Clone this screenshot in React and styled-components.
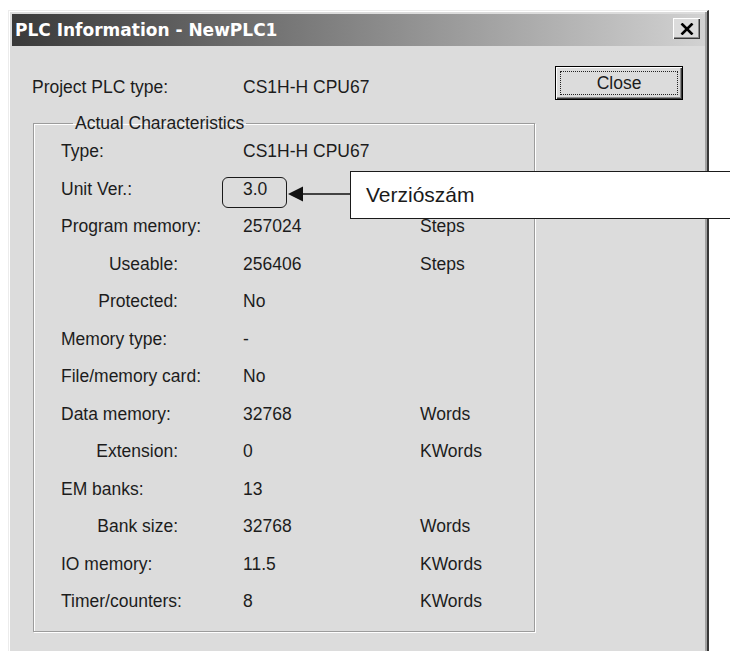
import React from "react";
import styled, { createGlobalStyle } from "styled-components";

const GlobalStyle = createGlobalStyle`
  html, body {
    margin: 0;
    background: #fff;
  }
  body {
    font-family: "Liberation Sans", Arial, sans-serif;
    color: #1c1c1c;
  }
`;

const Page = styled.div`
  position: relative;
  width: 730px;
  height: 651px;
  overflow: hidden;
  padding: 10px 0 0 8px;
  box-sizing: border-box;
`;

const Window = styled.div`
  width: 701px;
  height: 680px;
  box-sizing: border-box;
  background: #dcdcdc;
  border-top: 1px solid #ececec;
  border-left: 1px solid #ececec;
  border-right: 2px solid #383838;
  box-shadow: inset 1px 1px 0 #fff, inset -2px 0 0 #a2a2a2;
  padding: 3px 2px 0 3px;
  display: flex;
  flex-direction: column;
`;

const TitleBar = styled.div`
  height: 32px;
  display: flex;
  justify-content: space-between;
  padding: 0 5px 0 3px;
  background: linear-gradient(to right, #3a3a3a, #d2d2d2);
`;

const Title = styled.span`
  font-family: "DejaVu Sans", sans-serif;
  font-weight: bold;
  font-size: 17px;
  line-height: 32px;
  color: #fff;
`;

const CaptionButton = styled.div`
  margin-top: 4px;
  width: 27px;
  height: 21px;
  background: #dcdcdc;
  box-shadow: inset 1px 1px 0 #fff, inset -1px -1px 0 #3a3a3a,
    inset -2px -2px 0 #8c8c8c;
  display: flex;
  align-items: center;
  justify-content: center;
`;

const Body = styled.div`
  display: flex;
  align-items: flex-start;
  gap: 20px;
  padding: 0 22px 0 21px;
`;

const Main = styled.div`
  width: 502px;
`;

const ProjectRow = styled.div`
  display: grid;
  grid-template-columns: 211px 1fr;
  align-items: center;
  height: 38px;
  margin: 22px 0 0 -1px;
  font-size: 17.5px;
`;

const Group = styled.fieldset`
  margin: 7px 0 0;
  padding: 0 0 10px 27px;
  width: 100%;
  box-sizing: border-box;
  min-width: 0;
  border: 1px solid #9c9c9c;
  box-shadow: 1px 1px 0 #fff, inset 1px 1px 0 #fff;
`;

const Legend = styled.legend`
  margin-left: 12px;
  padding: 0 2px;
  font-size: 17.5px;
  line-height: 20px;
`;

const Rows = styled.div`
  display: grid;
  grid-template-columns: 182px 177px 1fr;
  grid-auto-rows: 37.5px;
  align-items: center;
  font-size: 17.5px;
`;

const Label = styled.span`
  text-align: ${(p) => (p.$indent ? "right" : "left")};
  padding-right: ${(p) => (p.$indent ? "65px" : "0")};
`;

const CloseButton = styled.button`
  position: relative;
  margin-top: 20px;
  width: 128px;
  height: 34px;
  flex: none;
  border: 1px solid #000;
  background: #dcdcdc;
  box-shadow: inset 1px 1px 0 #fff, inset -1px -1px 0 #3a3a3a,
    inset -2px -2px 0 #8c8c8c;
  font-family: "Liberation Sans", Arial, sans-serif;
  font-size: 17.5px;
  color: #1c1c1c;
  padding: 0;

  &::after {
    content: "";
    position: absolute;
    inset: 4px;
    border: 1px dotted #222;
  }
`;

/* annotation drawn over the dialog */
const VersionFrame = styled.div`
  position: absolute;
  left: 222px;
  top: 177px;
  width: 65px;
  height: 31px;
  box-sizing: border-box;
  border: 1.5px solid #1a1a1a;
  border-radius: 6px;
`;

const Arrow = styled.svg`
  position: absolute;
  left: 286px;
  top: 185px;
`;

const Callout = styled.div`
  position: absolute;
  left: 350px;
  top: 171px;
  width: 400px;
  height: 48px;
  box-sizing: border-box;
  border: 1.5px solid #1a1a1a;
  background: #fff;
  padding-left: 15px;
  display: flex;
  align-items: center;
  font-size: 21px;
  color: #1a1a1a;
`;

const rows = [
  ["Type:", "CS1H-H CPU67", ""],
  ["Unit Ver.:", "3.0", ""],
  ["Program memory:", "257024", "Steps"],
  ["Useable:", "256406", "Steps", true],
  ["Protected:", "No", "", true],
  ["Memory type:", "-", ""],
  ["File/memory card:", "No", ""],
  ["Data memory:", "32768", "Words"],
  ["Extension:", "0", "KWords", true],
  ["EM banks:", "13", ""],
  ["Bank size:", "32768", "Words", true],
  ["IO memory:", "11.5", "KWords"],
  ["Timer/counters:", "8", "KWords"],
];

export default function App() {
  return (
    <>
      <GlobalStyle />
      <Page>
        <Window>
          <TitleBar>
            <Title>PLC Information - NewPLC1</Title>
            <CaptionButton>
              <svg width="14" height="12" viewBox="0 0 14 12">
                <path
                  d="M1.5 0.5 L12.5 11.5 M12.5 0.5 L1.5 11.5"
                  stroke="#000"
                  strokeWidth="2.6"
                />
              </svg>
            </CaptionButton>
          </TitleBar>
          <Body>
            <Main>
              <ProjectRow>
                <span>Project PLC type:</span>
                <span>CS1H-H CPU67</span>
              </ProjectRow>
              <Group>
                <Legend>Actual Characteristics</Legend>
                <Rows>
                  {rows.map(([label, value, unit, indent]) => (
                    <React.Fragment key={label}>
                      <Label $indent={indent}>{label}</Label>
                      <span>{value}</span>
                      <span>{unit}</span>
                    </React.Fragment>
                  ))}
                </Rows>
              </Group>
            </Main>
            <CloseButton>Close</CloseButton>
          </Body>
        </Window>

        <VersionFrame />
        <Arrow width="66" height="18" viewBox="0 0 66 18">
          <path d="M2 9 L17 1.5 L17 16.5 Z" fill="#111" />
          <line x1="15" y1="9" x2="66" y2="9" stroke="#111" strokeWidth="1.6" />
        </Arrow>
        <Callout>Verziószám</Callout>
      </Page>
    </>
  );
}
